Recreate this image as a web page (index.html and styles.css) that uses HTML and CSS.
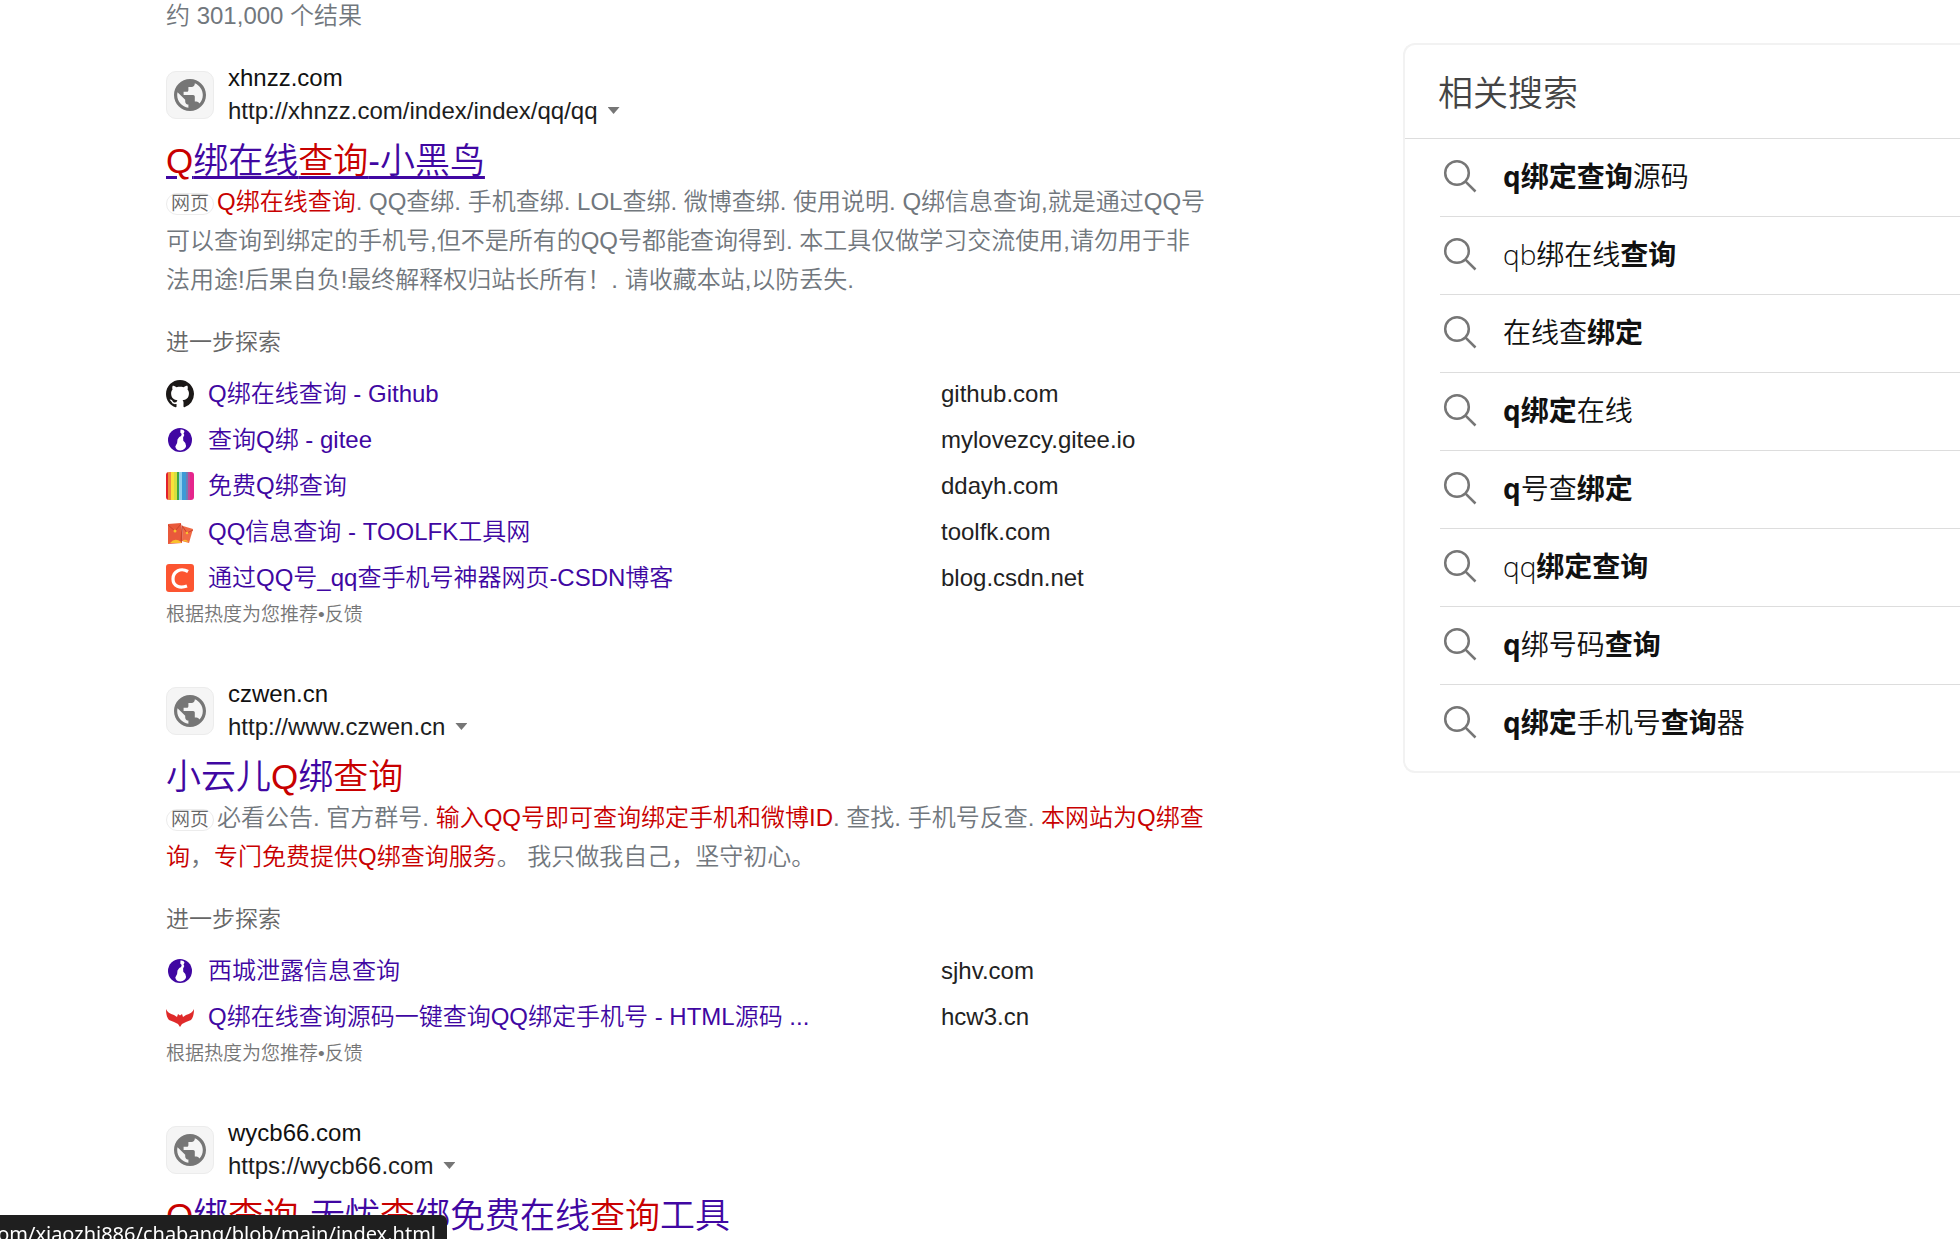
FILE: index.html
```html
<!DOCTYPE html>
<html lang="zh-CN">
<head>
<meta charset="utf-8">
<title>搜索结果</title>
<link rel="stylesheet" href="styles.css">
</head>
<body>
<svg class="defs" aria-hidden="true">
  <symbol id="globe" viewBox="2 2 20 20">
    <path fill="#767676" d="M12 2C6.480 2 2 6.480 2 12s4.480 10 10 10 10-4.480 10-10S17.520 2 12 2zm-1 17.930c-3.950-.49-7-3.850-7-7.930 0-.62.08-1.210.21-1.790L9 15v1c0 1.100.9 2 2 2v1.930zm6.900-2.540c-.26-.81-1-1.390-1.900-1.390h-1v-3c0-.55-.45-1-1-1H8v-2h2c.55 0 1-.45 1-1V7h2c1.100 0 2-.9 2-2v-.41c2.930 1.190 5 4.060 5 7.410 0 2.080-.8 3.970-2.100 5.390z"/>
  </symbol>
  <symbol id="minor-globe" viewBox="0 0 28 28">
    <circle cx="14" cy="14" r="12" fill="#4007a2"/>
    <path fill="#fff" d="M14.500 3.500c2-.2 3.600.6 4 2.200l-1 1.800.8 1.600-1.200 2.400.2 3.200 2 2.400.8 3c-.4 2.600-2.600 4-5.600 4.400-3 0-4.800-1.600-5.200-4l1.800-3.400.4-3.600 1.800-2.400 1.800-1.200.6-1.800-1.400-1.600z"/>
  </symbol>
  <symbol id="search" viewBox="0 0 34 34">
    <g fill="none" stroke="#767676" stroke-width="2.500"><circle cx="14" cy="14" r="11.800"/><path d="M22.300 22.300L32.500 32.500"/></g>
  </symbol>
</svg>

<div class="page">
  <main class="results">
    <p class="count">约 301,000 个结果</p>

    <article class="result">
      <header class="site">
        <span class="favicon"><svg><use href="#globe"/></svg></span>
        <div class="site-text">
          <div>xhnzz.com</div>
          <div class="url">http://xhnzz.com/index/index/qq/qq<button class="more" aria-label="更多操作"></button></div>
        </div>
      </header>
      <h2 class="title hovered"><a href="#"><em>Q</em>绑在线<em>查询</em>-小黑鸟</a></h2>
      <p class="snippet"><span class="tag">网页</span><em>Q绑在线查询</em>. QQ查绑. 手机查绑. LOL查绑. 微博查绑. 使用说明. Q绑信息查询,就是通过QQ号可以查询到绑定的手机号,但不是所有的QQ号都能查询得到. 本工具仅做学习交流使用,请勿用于非法用途!后果自负!最终解释权归站长所有！. 请收藏本站,以防丢失.</p>
      <section class="explore">
        <h3>进一步探索</h3>
        <ul>
          <li>
            <svg viewBox="0 0 16 16"><path fill="#1b1817" d="M8 0C3.580 0 0 3.580 0 8c0 3.540 2.290 6.530 5.470 7.590.4.070.55-.17.55-.38 0-.19-.01-.82-.01-1.490-2.010.37-2.530-.49-2.690-.94-.09-.23-.48-.94-.82-1.130-.28-.15-.68-.52-.01-.53.63-.01 1.080.58 1.230.82.72 1.210 1.870.87 2.330.66.070-.52.28-.87.51-1.070-1.780-.2-3.640-.89-3.640-3.950 0-.87.31-1.590.82-2.150-.08-.2-.36-1.020.08-2.120 0 0 .67-.21 2.200.82.64-.18 1.320-.27 2-.27s1.360.09 2 .27c1.530-1.040 2.200-.82 2.200-.82.44 1.100.16 1.920.08 2.120.51.56.82 1.270.82 2.150 0 3.070-1.870 3.750-3.650 3.950.29.25.54.73.54 1.480 0 1.070-.01 1.930-.01 2.200 0 .21.15.46.55.38A8.010 8.010 0 0 0 16 8c0-4.420-3.580-8-8-8z"/></svg>
            <a href="#">Q绑在线查询 - Github</a><span>github.com</span>
          </li>
          <li><svg><use href="#minor-globe"/></svg><a href="#">查询Q绑 - gitee</a><span>mylovezcy.gitee.io</span></li>
          <li><i class="stripes"></i><a href="#">免费Q绑查询</a><span>ddayh.com</span></li>
          <li>
            <svg viewBox="0 0 28 28">
              <path fill="#e9593b" d="M2 6l13-1 1 20-14 1z"/><path fill="#f06a45" d="M17 8l10 3-4 14-7-2z"/>
              <path fill="#c9432c" d="M15.500 7l1.500 1-1 16-1.500-1z"/>
              <path fill="none" stroke="#c9432c" d="M2 7l7 6 6-7M17 9l4 6 6-3"/>
              <path fill="#f9bf2c" d="M4 25q5-6 11-1v1zM16.500 23q3-3 6 1z"/><circle cx="9" cy="13" r="1.500" fill="#f9bf2c"/><circle cx="21" cy="15" r="1.300" fill="#f9bf2c"/>
            </svg>
            <a href="#">QQ信息查询 - TOOLFK工具网</a><span>toolfk.com</span>
          </li>
          <li>
            <svg viewBox="0 0 28 28"><rect width="28" height="28" rx="3" fill="#fc5531"/><path fill="none" stroke="#fff" stroke-width="3.200" d="M22 7.500C15 3.500 7 7 7 15c0 7.500 7 9.500 14 7"/></svg>
            <a href="#">通过QQ号_qq查手机号神器网页-CSDN博客</a><span>blog.csdn.net</span>
          </li>
        </ul>
        <footer>根据热度为您推荐•<a href="#">反馈</a></footer>
      </section>
    </article>

    <article class="result">
      <header class="site">
        <span class="favicon"><svg><use href="#globe"/></svg></span>
        <div class="site-text">
          <div>czwen.cn</div>
          <div class="url">http://www.czwen.cn<button class="more" aria-label="更多操作"></button></div>
        </div>
      </header>
      <h2 class="title"><a href="#">小云儿<em>Q</em>绑<em>查询</em></a></h2>
      <p class="snippet"><span class="tag">网页</span>必看公告. 官方群号. <em>输入QQ号即可查询绑定手机和微博ID</em>. 查找. 手机号反查. <em>本网站为Q绑查询</em>，<em>专门免费提供Q绑查询服务</em>。 我只做我自己，坚守初心。</p>
      <section class="explore">
        <h3>进一步探索</h3>
        <ul>
          <li><svg><use href="#minor-globe"/></svg><a href="#">西城泄露信息查询</a><span>sjhv.com</span></li>
          <li>
            <svg viewBox="0 0 28 28"><path fill="#df2a2a" d="M0 6c1 3 4 5 8 6l3 2 1-3 2 1.500 2-1.500 1 3 3-2c4-1 7-3 8-6 0 5-1 9-3 11l-5 2-4 2-2 3-2-3-4-2-5-2C1 15 0 11 0 6z"/></svg>
            <a href="#">Q绑在线查询源码一键查询QQ绑定手机号 - HTML源码 ...</a><span>hcw3.cn</span>
          </li>
        </ul>
        <footer>根据热度为您推荐•<a href="#">反馈</a></footer>
      </section>
    </article>

    <article class="result">
      <header class="site">
        <span class="favicon"><svg><use href="#globe"/></svg></span>
        <div class="site-text">
          <div>wycb66.com</div>
          <div class="url">https://wycb66.com<button class="more" aria-label="更多操作"></button></div>
        </div>
      </header>
      <h2 class="title"><a href="#"><em>Q</em>绑<em>查询</em>-无忧<em>查</em>绑免费在线<em>查询</em>工具</a></h2>
    </article>
  </main>

  <aside class="related">
    <h2>相关搜索</h2>
    <ul>
      <li><a href="#"><svg><use href="#search"/></svg><span><b>q绑定查询</b>源码</span></a></li>
      <li><a href="#"><svg><use href="#search"/></svg><span>qb绑在线<b>查询</b></span></a></li>
      <li><a href="#"><svg><use href="#search"/></svg><span>在线查<b>绑定</b></span></a></li>
      <li><a href="#"><svg><use href="#search"/></svg><span><b>q绑定</b>在线</span></a></li>
      <li><a href="#"><svg><use href="#search"/></svg><span><b>q</b>号查<b>绑定</b></span></a></li>
      <li><a href="#"><svg><use href="#search"/></svg><span>qq<b>绑定查询</b></span></a></li>
      <li><a href="#"><svg><use href="#search"/></svg><span><b>q</b>绑号码<b>查询</b></span></a></li>
      <li><a href="#"><svg><use href="#search"/></svg><span><b>q绑定</b>手机号<b>查询</b>器</span></a></li>
    </ul>
  </aside>
</div>
<div class="status"><span>com/xiaozhi886/chabang/blob/main/index.html</span></div>
</body>
</html>
```

FILE: styles.css
```css
* { box-sizing: border-box; }
body {
  margin: 0;
  height: 100vh;
  overflow: hidden;
  background: #fff;
  color: #111;
  font: 350 24px/33px "Liberation Sans", "Noto Sans CJK SC", sans-serif;
}
h2, h3, p, ul { margin: 0; padding: 0; font-weight: 350; }
ul { list-style: none; }
a { color: inherit; text-decoration: none; }
em { color: #c80000; font-style: normal; }
.defs { position: absolute; width: 0; height: 0; }

.page {
  display: grid;
  grid-template-columns: minmax(0, 1062px) minmax(0, 1fr);
  column-gap: 175px;
  align-items: start;
  padding-left: 166px;
}

.count { margin-bottom: 30px; color: #71777d; line-height: 32px; }
.result { margin-bottom: 49px; }

.site { display: flex; align-items: center; gap: 14px; height: 66px; }
.site-text { padding-bottom: 2px; }
.favicon {
  display: flex;
  align-items: center;
  justify-content: center;
  width: 48px;
  height: 48px;
  border: 1px solid #ececec;
  border-radius: 10px;
  background: #f5f5f5;
}
.favicon svg { width: 32px; height: 32px; }
.url { display: flex; align-items: center; gap: 10px; color: #1d1d1d; }
.more {
  width: 12px;
  height: 7px;
  padding: 0;
  border: 0;
  background: #767676;
  clip-path: polygon(0 0, 100% 0, 50% 100%);
}

.title { padding-top: 12px; color: #4007a2; font-size: 35px; line-height: 42px; white-space: nowrap; }
.hovered a {
  text-decoration: underline;
  text-decoration-thickness: 3px;
  text-underline-offset: 3px;
}

.snippet { padding-right: 18px; color: #71777d; line-height: 39px; }
.tag {
  display: inline-block;
  margin-right: 3px;
  padding: 0 4px;
  border: 1px solid #ececec;
  border-radius: 11px;
  color: #666;
  font-size: 19px;
  line-height: 20px;
}

.explore { padding-top: 29px; }
.explore h3 { margin-bottom: 15px; color: #666; font-size: 23px; line-height: 28px; }
.explore li {
  display: grid;
  grid-template-columns: 28px minmax(0, 719px) 1fr;
  column-gap: 14px;
  align-items: center;
  line-height: 46px;
}
.explore li svg, .stripes { width: 28px; height: 28px; }
.explore li a { color: #4007a2; }
.explore li span { color: #222; }
.stripes {
  border-radius: 3px;
  background: linear-gradient(90deg, #e3202b 0 7%, #f08a3c 7% 18%, #f9e13a 18% 30%, #d5df3f 30% 38%, #3da447 38% 46%, #8fd0ee 46% 58%, #3d9ad6 58% 70%, #6d7fb5 70% 80%, #c44a98 80% 87%, #e5258c 87%);
}
.explore footer { color: #767676; font-size: 19px; line-height: 28px; }

.related {
  margin-top: 43px;
  padding-bottom: 9px;
  border: 2px solid #f2f2f2;
  border-right: 0;
  border-radius: 12px 0 0 12px;
  font-family: "Open Sans", "Noto Sans CJK SC", sans-serif;
}
.related h2 {
  padding: 27px 33px 25px;
  border-bottom: 1px solid #ddd;
  color: #444;
  font-size: 35px;
  line-height: 41px;
}
.related ul { padding-left: 35px; }
.related li + li { border-top: 1px solid #ddd; }
.related a { display: flex; align-items: center; gap: 26px; padding: 0 0 3px 3px; font-size: 28px; line-height: 74px; }
.related svg { width: 34px; height: 34px; }
.related b { font-weight: 700; }

.status {
  position: fixed;
  left: 0;
  bottom: 0;
  display: flex;
  justify-content: flex-end;
  width: 447px;
  height: 24px;
  padding-right: 11px;
  overflow: hidden;
  border-top-right-radius: 6px;
  background: #1f1f1f;
  color: #fff;
  font: 20px/37px "Noto Sans", sans-serif;
  white-space: nowrap;
}
```
